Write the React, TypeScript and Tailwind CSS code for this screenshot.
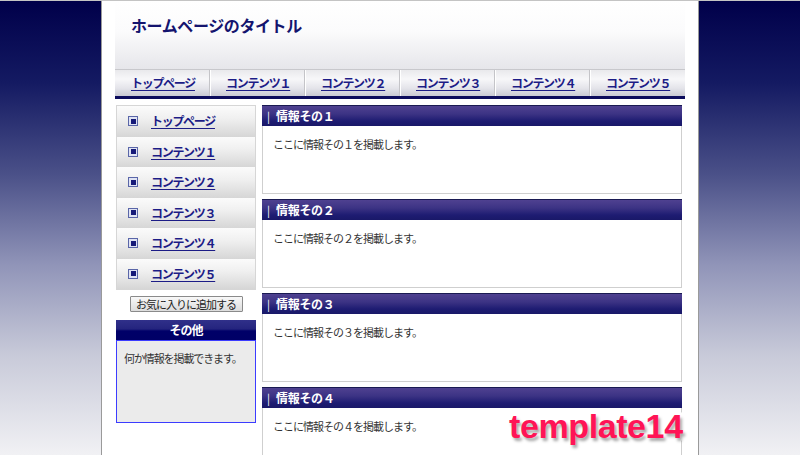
const jp = "font-['Noto_Sans_CJK_JP','Noto_Sans',sans-serif]";

const navItems = ["トップページ", "コンテンツ１", "コンテンツ２", "コンテンツ３", "コンテンツ４", "コンテンツ５"];
const sections = ["その１", "その２", "その３", "その４"];

function Bullet() {
  return (
    <div className="flex h-[10px] w-[10px] shrink-0 items-center justify-center border border-[#5a66a8] bg-[#dfe3f3]">
      <div className="h-[5px] w-[5px] bg-[#161a78]" />
    </div>
  );
}

export default function App() {
  return (
    <div
      className={`relative h-[455px] w-full overflow-hidden border-t border-[#c4c4c4] bg-[linear-gradient(to_bottom,#00004a_0%,#141a62_18%,#4a5088_38%,#9094b8_58%,#c8cad9_78%,#f1f1f4_100%)] ${jp}`}
    >
      <div className="mx-auto h-full w-[598px] border-x border-[#9a9a9a] bg-white px-[13px]">
        {/* header */}
        <div className="flex h-[68px] items-start bg-[linear-gradient(to_bottom,#ffffff_0%,#fbfbfc_45%,#e6e6ea_100%)] pl-4 pt-[12px]">
          <h1 className="text-[16px] font-bold tracking-[-0.4px] text-[#14146e]">ホームページのタイトル</h1>
        </div>

        {/* nav */}
        <div className="flex h-[30px] border-t border-[#c8c8cc] border-b-[3px] border-b-[#0c0c5c] bg-[linear-gradient(to_bottom,#e9e9ec_0%,#f7f7f9_35%,#e4e4ea_70%,#c9cad3_100%)]">
          {navItems.map((n, i) => (
            <div
              key={n}
              className={`flex w-[95px] items-center pl-4 ${i < 5 ? "border-r border-r-[#c4c4c8] shadow-[1px_0_0_#ffffff]" : ""}`}
            >
              <a className="text-[12px] font-bold tracking-[-1.3px] text-[#1c1c86] underline underline-offset-2">{n}</a>
            </div>
          ))}
        </div>

        {/* columns */}
        <div className="mt-[6px] flex gap-[6px] pl-px">
          {/* sidebar */}
          <div className="flex w-[140px] shrink-0 flex-col">
            <div className="border border-[#d6d6d6]">
              {navItems.map((n) => (
                <div
                  key={n}
                  className="flex h-[30.5px] items-center gap-[13px] bg-[linear-gradient(to_bottom,#fbfbfb_0%,#f0f0f0_40%,#d6d6d6_100%)] pl-[11px]"
                >
                  <Bullet />
                  <a className="text-[12px] font-bold tracking-[-1.3px] text-[#1c1c86] underline underline-offset-2">{n}</a>
                </div>
              ))}
            </div>

            <div className="flex justify-center py-[6px]">
              <button className="h-[16px] w-[113px] rounded-[1px] border border-[#8a8a8a] bg-[linear-gradient(to_bottom,#f8f8f8,#dcdcdc)] text-[11px] leading-none tracking-[-1px] text-[#222222]">
                お気に入りに追加する
              </button>
            </div>

            <div className="mt-[2px]">
              <div className="flex h-[20px] items-center justify-center bg-[linear-gradient(to_bottom,#30308a_0%,#24247e_45%,#000068_55%,#000066_100%)] text-[12px] font-bold tracking-[-1px] text-white">
                その他
              </div>
              <div className="h-[83px] border border-[#3c3cff] bg-[#ebebeb] px-[7px] pt-[9px] text-[11px] tracking-[-1.1px] text-[#333333]">
                何か情報を掲載できます。
              </div>
            </div>
          </div>

          {/* main */}
          <div className="flex w-[420px] flex-col gap-[5px]">
            {sections.map((s) => (
              <div key={s}>
                <div className="flex h-[21px] items-center gap-[6px] border-t border-[#1a1a52] bg-[linear-gradient(to_bottom,#4f4190_0%,#3c3384_40%,#1e1c72_75%,#191868_100%)] pl-[5px] text-[12px] font-bold text-white">
                  <span className="text-[11px] font-normal">|</span>
                  <span className="tracking-[-0.3px]">情報{s}</span>
                </div>
                <div className="h-[68px] border border-t-0 border-[#cfcfcf] bg-white pl-[10px] pt-[10px] text-[11px] tracking-[-1px] text-[#333333]">
                  ここに情報{s}を掲載します。
                </div>
              </div>
            ))}
          </div>
        </div>
      </div>

      {/* watermark */}
      <div className="absolute left-[509px] top-[400px] font-['Liberation_Sans',Arial,sans-serif] text-[34px] font-bold tracking-[-0.4px] text-[#ff1456] [-webkit-text-stroke:5px_white] [paint-order:stroke_fill] [text-shadow:2px_3px_3px_rgba(0,0,0,0.35)]">
        template14
      </div>
    </div>
  );
}
